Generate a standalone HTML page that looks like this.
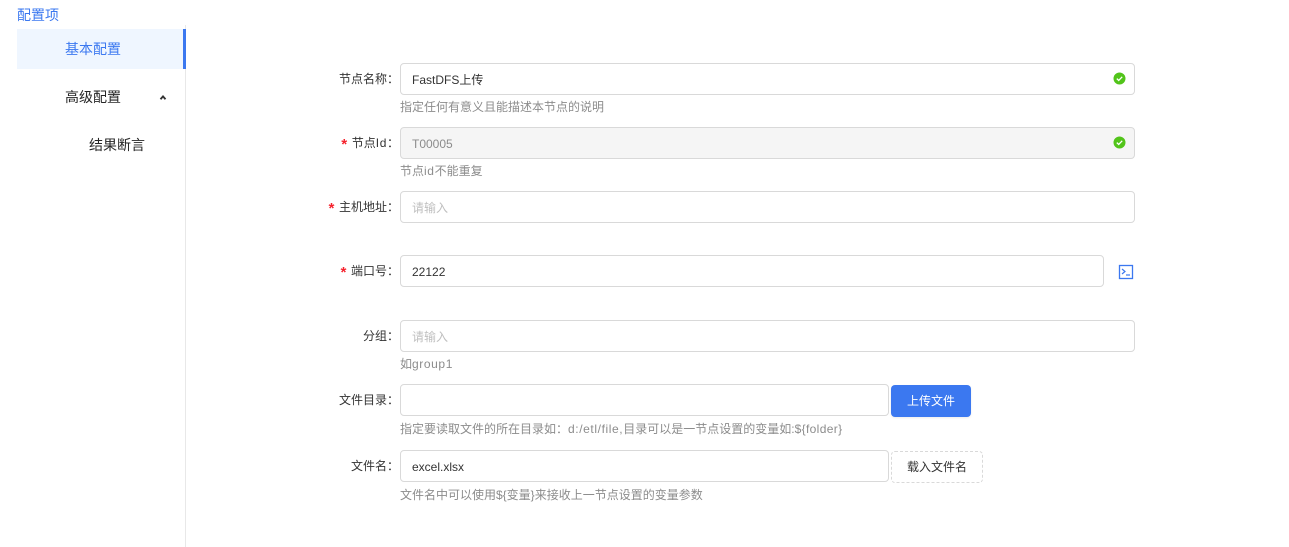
<!DOCTYPE html>
<html lang="zh-CN">
<head>
<meta charset="utf-8">
<style>
html,body{margin:0;padding:0;background:#fff;}
body{width:1289px;height:547px;overflow:hidden;position:relative;font-family:"Liberation Sans","Noto Sans CJK SC",sans-serif;font-size:12px;color:#262626;}
.a{position:absolute;white-space:nowrap;}
.menu{font-size:14px;line-height:20px;}
.label{right:890px;line-height:20px;font-size:12px;color:#333;}
.label i{display:inline-block;width:8px;text-align:center;font-style:normal;font-weight:bold;font-size:15px;line-height:0;position:relative;top:3px;color:#f5222d;font-family:"Liberation Mono",monospace;margin-right:4px;}
.input{position:absolute;box-sizing:border-box;height:32px;left:400px;width:735px;border:1px solid #d9d9d9;border-radius:4px;background:#fff;line-height:32px;padding-left:11px;font-size:12px;color:#333;}
.ph{color:#bfbfbf;}
.dis{background:#f5f5f5;color:#8c8c8c;}
.help{left:400px;line-height:18px;font-size:12px;color:#8c8c8c;}
.ok{position:absolute;left:1112.500px;}
.l{letter-spacing:.6px;}
</style>
</head>
<body>
<div class="a" style="left:17px;top:6px;font-size:14px;line-height:18px;color:#3b78f0;">配置项</div>
<div class="a" style="left:185px;top:25px;width:1px;height:522px;background:#e8e8e8;"></div>
<div class="a" style="left:17px;top:29px;width:169px;height:40px;background:#eff6ff;"></div>
<div class="a" style="left:183px;top:29px;width:3px;height:40px;background:#3b78f0;"></div>
<div class="a menu" style="left:65px;top:39px;color:#3b78f0;">基本配置</div>
<div class="a menu" style="left:65px;top:87px;color:#262626;">高级配置</div>
<svg class="a" style="left:158px;top:93px;" width="10" height="8" viewBox="0 0 10 8"><path d="M2.500 6.200L5 3.400L7.500 6.200" fill="none" stroke="#333" stroke-width="1.900"/></svg>
<div class="a menu" style="left:89px;top:135px;color:#262626;">结果断言</div>

<div class="a label" style="top:69px;">节点名称：</div>
<div class="input" style="top:63px;">FastDFS上传</div>
<div class="a help" style="top:98px;">指定任何有意义且能描述本节点的说明</div>

<div class="a label" style="top:133px;"><i>*</i>节点<span class="l">Id</span>：</div>
<div class="input dis" style="top:127px;">T00005</div>
<div class="a help" style="top:162px;">节点<span class="l">id</span>不能重复</div>

<div class="a label" style="top:197px;"><i>*</i>主机地址：</div>
<div class="input ph" style="top:191px;">请输入</div>

<div class="a label" style="top:261px;"><i>*</i>端口号：</div>
<div class="input" style="top:255px;width:704px;">22122</div>
<svg class="a" style="left:1118px;top:264px;" width="16" height="16" viewBox="0 0 16 16"><rect x="1.500" y="1.500" width="13" height="13" fill="none" stroke="#3b78f0" stroke-width="1.300"/><path d="M4 5L7 7.500L4 10" fill="none" stroke="#3b78f0" stroke-width="1.200"/><path d="M8 11H12" stroke="#3b78f0" stroke-width="1.200"/></svg>

<div class="a label" style="top:326px;">分组：</div>
<div class="input ph" style="top:320px;">请输入</div>
<div class="a help" style="top:355px;">如<span class="l">group1</span></div>

<div class="a label" style="top:390px;">文件目录：</div>
<div class="input" style="top:384px;width:489px;"></div>
<div class="a" style="left:891px;top:385px;width:80px;height:32px;background:#3b78f0;border-radius:4px;color:#fff;text-align:center;line-height:32px;font-size:12px;box-shadow:0 1px 2px rgba(0,0,0,.08);">上传文件</div>
<div class="a help" style="top:420px;">指定要读取文件的所在目录如：<span class="l">d:/etl/file,</span>目录可以是一节点设置的变量如:<span style="letter-spacing:.35px;">${folder}</span></div>

<div class="a label" style="top:456px;">文件名：</div>
<div class="input" style="top:450px;width:489px;">excel.xlsx</div>
<div class="a" style="left:891px;top:451px;width:92px;height:32px;box-sizing:border-box;border:1px dashed #d9d9d9;border-radius:4px;color:#333;text-align:center;line-height:30px;font-size:12px;">载入文件名</div>
<div class="a help" style="top:486px;">文件名中可以使用${变量}来接收上一节点设置的变量参数</div>

<svg class="ok" style="top:72px;" width="13" height="13" viewBox="0 0 13 13"><circle cx="6.500" cy="6.500" r="6" fill="#52c41a"/><path d="M3.800 6.600L5.700 8.400L9.200 4.800" fill="none" stroke="#fff" stroke-width="1.300"/></svg>
<svg class="ok" style="top:136px;" width="13" height="13" viewBox="0 0 13 13"><circle cx="6.500" cy="6.500" r="6" fill="#52c41a"/><path d="M3.800 6.600L5.700 8.400L9.200 4.800" fill="none" stroke="#fff" stroke-width="1.300"/></svg>
</body>
</html>
